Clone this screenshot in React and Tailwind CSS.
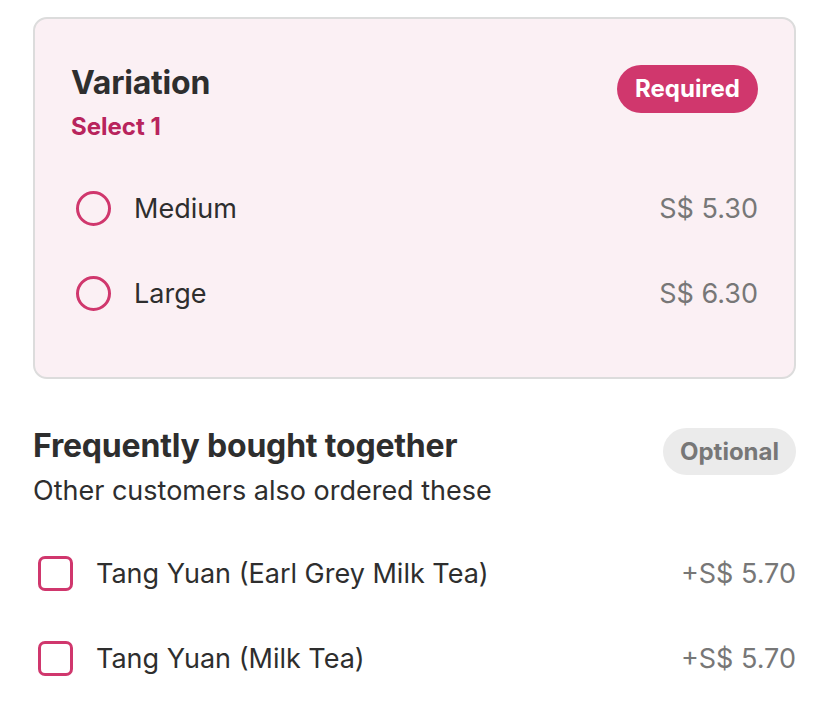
import { useState } from "react";

const variations = [
  { name: "Medium", price: "S$ 5.30" },
  { name: "Large", price: "S$ 6.30" },
];

const addons = [
  { name: "Tang Yuan (Earl Grey Milk Tea)", price: "+S$ 5.70" },
  { name: "Tang Yuan (Milk Tea)", price: "+S$ 5.70" },
];

export default function App() {
  const [picked, setPicked] = useState(null);
  const [checked, setChecked] = useState([]);

  const toggle = (name) =>
    setChecked((c) => (c.includes(name) ? c.filter((n) => n !== name) : [...c, name]));

  return (
    <div className="min-h-screen bg-white pl-[33px] pr-[32px] pt-[17px] font-['Inter',sans-serif] text-[#2e2e2e]">
      <section className="rounded-[14px] border-2 border-[#dcdcdc] bg-[#fbf0f4] pb-[41px] pl-[36px] pr-[36px] pt-[45px]">
        <div className="flex items-start justify-between">
          <div>
            <h2 className="text-[32px] font-bold leading-[38px] tracking-[-0.2px]">Variation</h2>
            <p className="mt-[10px] text-[24px] font-bold leading-[30px] text-[#b8245c]">Select 1</p>
          </div>
          <span className="mt-[1px] rounded-full bg-[#d0376d] px-[18px] py-[10px] text-[24px] font-bold leading-[28px] text-white">
            Required
          </span>
        </div>
        <div className="mt-[24px]">
          {variations.map((v) => (
            <button
              key={v.name}
              type="button"
              onClick={() => setPicked(v.name)}
              className="flex h-[85px] w-full items-center justify-between text-left"
            >
              <span className="flex items-center gap-[23px]">
                <span className="ml-[5px] flex h-[35px] w-[35px] items-center justify-center rounded-full border-[3px] border-[#d0376d]">
                  {picked === v.name && <span className="h-[17px] w-[17px] rounded-full bg-[#d0376d]" />}
                </span>
                <span className="text-[27px] leading-[32px]">{v.name}</span>
              </span>
              <span className="text-[27px] leading-[32px] text-[#777]">{v.price}</span>
            </button>
          ))}
        </div>
      </section>

      <section className="pt-[48px]">
        <div className="flex items-start justify-between">
          <div>
            <h2 className="text-[32px] font-bold leading-[38px] tracking-[-0.2px]">Frequently bought together</h2>
            <p className="mt-[10px] text-[27px] leading-[32px]">Other customers also ordered these</p>
          </div>
          <span className="mt-[1px] rounded-full bg-[#ebebeb] px-[17px] py-[10px] text-[24px] font-bold leading-[27px] text-[#777]">
            Optional
          </span>
        </div>
        <div className="mt-[24px]">
          {addons.map((a) => (
            <button
              key={a.name}
              type="button"
              onClick={() => toggle(a.name)}
              className="flex h-[85px] w-full items-center justify-between text-left"
            >
              <span className="flex items-center gap-[23px]">
                <span className="ml-[5px] flex h-[35px] w-[35px] items-center justify-center rounded-[7px] border-[3px] border-[#d0376d]">
                  {checked.includes(a.name) && <span className="h-[15px] w-[15px] rounded-[3px] bg-[#d0376d]" />}
                </span>
                <span className="text-[27px] leading-[32px]">{a.name}</span>
              </span>
              <span className="text-[27px] leading-[32px] text-[#777]">{a.price}</span>
            </button>
          ))}
        </div>
      </section>
    </div>
  );
}
